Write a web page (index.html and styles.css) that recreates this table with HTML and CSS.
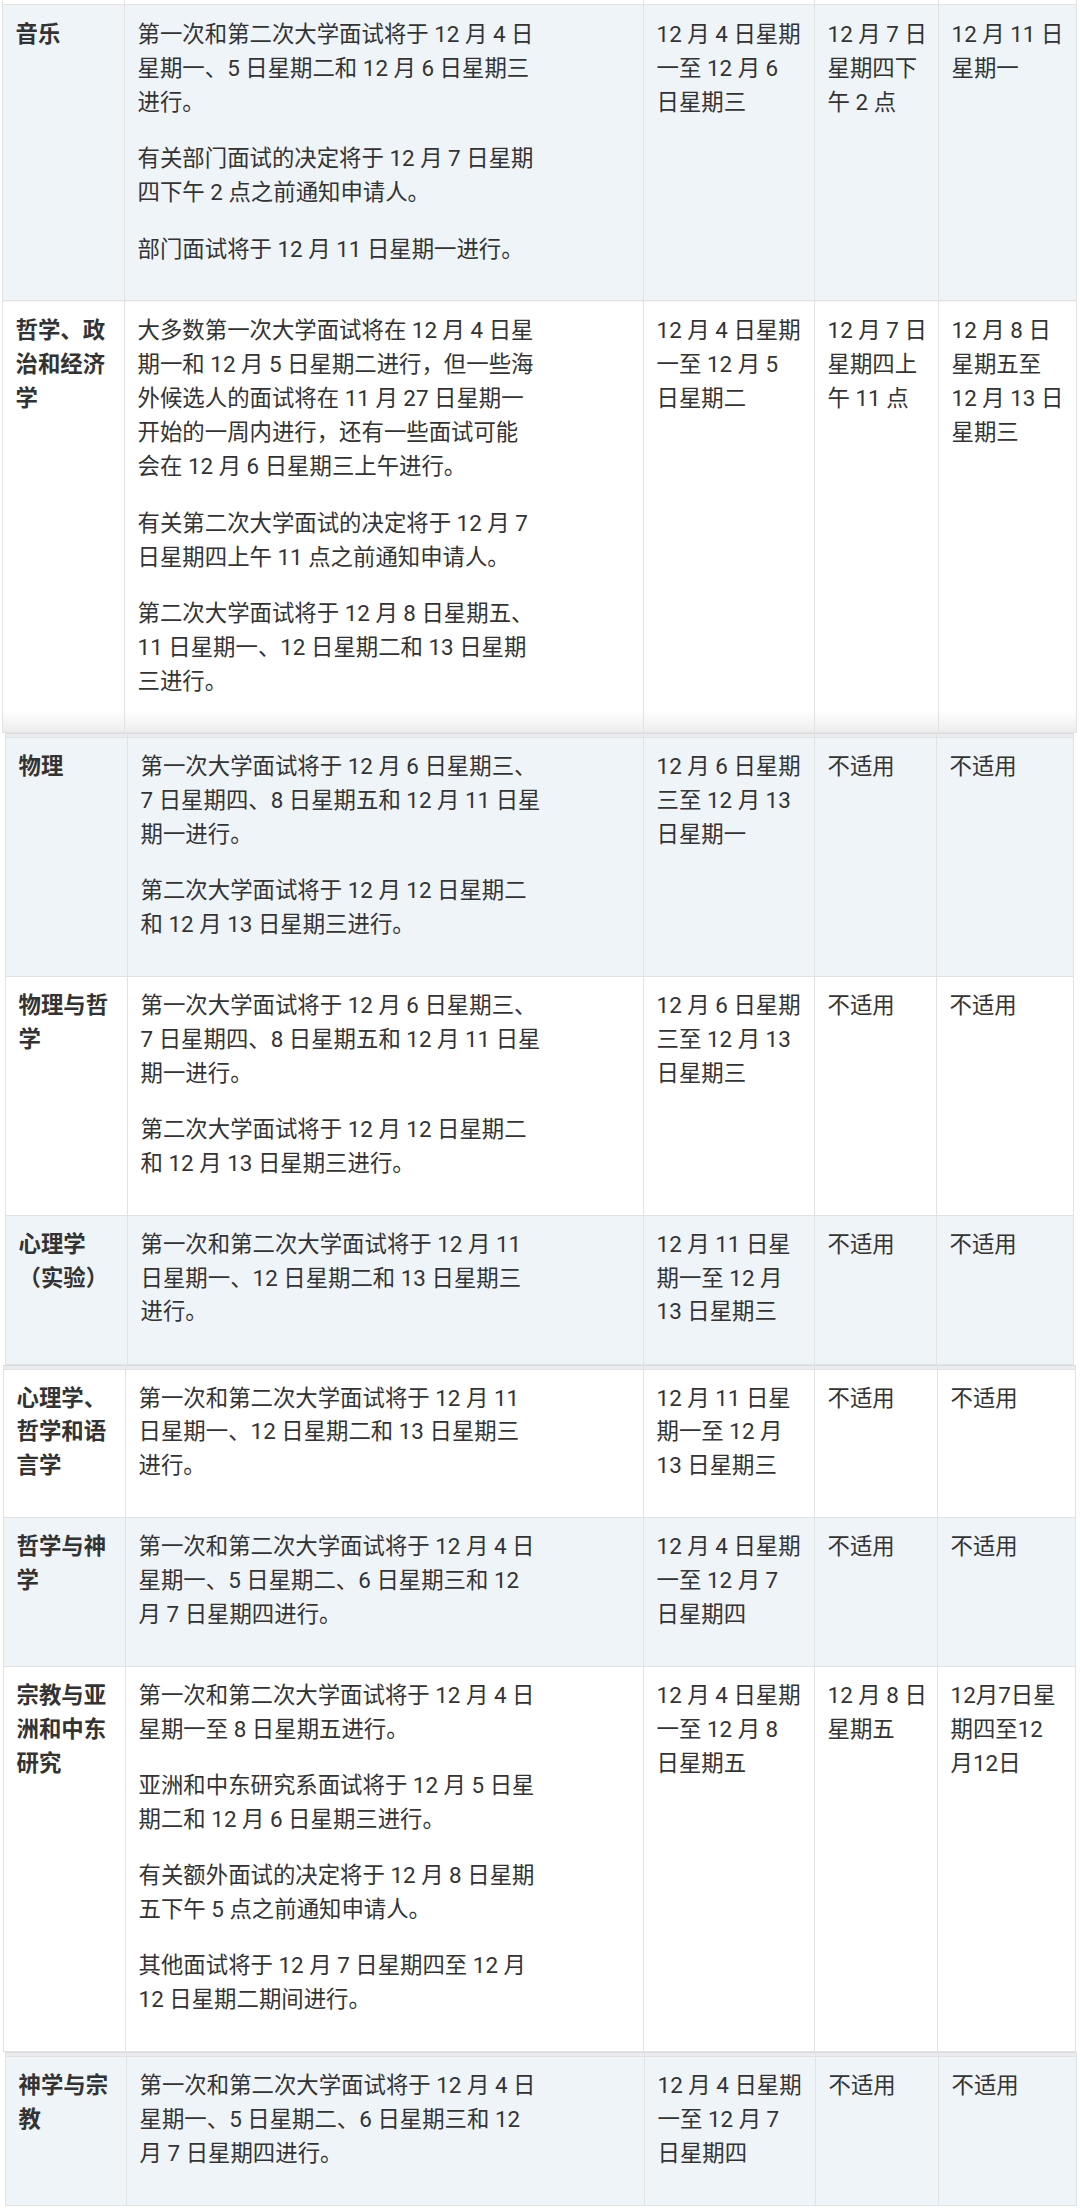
FILE: index.html
```html
<!DOCTYPE html>
<html lang="zh-CN">
<head>
<meta charset="utf-8">
<title>面试日期</title>
<link rel="stylesheet" href="styles.css">
</head>
<body>
<div class="page">

<table class="seg seg1">
  <colgroup><col class="c1"><col class="c2"><col class="c3"><col class="c4"><col class="c5"></colgroup>
  <tr class="cut"><td></td><td></td><td></td><td></td><td></td></tr>
  <tr class="alt">
    <th>音乐</th>
    <td class="desc">
      <p>第一次和第二次大学面试将于 12 月 4 日星期一、5 日星期二和 12 月 6 日星期三进行。</p>
      <p>有关部门面试的决定将于 12 月 7 日星期四下午 2 点之前通知申请人。</p>
      <p>部门面试将于 12 月 11 日星期一进行。</p>
    </td>
    <td>12 月 4 日星期一至 12 月 6 日星期三</td>
    <td class="n4">12 月 7 日星期四下午 2 点</td>
    <td>12 月 11 日星期一</td>
  </tr>
  <tr class="fade">
    <th>哲学、政治和经济学</th>
    <td class="desc">
      <p>大多数第一次大学面试将在 12 月 4 日星期一和 12 月 5 日星期二进行，但一些海外候选人的面试将在 11 月 27 日星期一开始的一周内进行，还有一些面试可能会在 12 月 6 日星期三上午进行。</p>
      <p>有关第二次大学面试的决定将于 12 月 7 日星期四上午 11 点之前通知申请人。</p>
      <p>第二次大学面试将于 12 月 8 日星期五、11 日星期一、12 日星期二和 13 日星期三进行。</p>
    </td>
    <td>12 月 4 日星期一至 12 月 5 日星期二</td>
    <td class="n4">12 月 7 日星期四上午 11 点</td>
    <td>12 月 8 日星期五至 12 月 13 日星期三</td>
  </tr>
</table>

<table class="seg seg2">
  <colgroup><col class="c1"><col class="c2"><col class="c3"><col class="c4"><col class="c5"></colgroup>
  <tr class="cut seam"><td></td><td></td><td></td><td></td><td></td></tr>
  <tr class="alt">
    <th>物理</th>
    <td class="desc">
      <p>第一次大学面试将于 12 月 6 日星期三、7 日星期四、8 日星期五和 12 月 11 日星期一进行。</p>
      <p>第二次大学面试将于 12 月 12 日星期二和 12 月 13 日星期三进行。</p>
    </td>
    <td>12 月 6 日星期三至 12 月 13 日星期一</td>
    <td class="n4">不适用</td>
    <td>不适用</td>
  </tr>
  <tr>
    <th>物理与哲学</th>
    <td class="desc">
      <p>第一次大学面试将于 12 月 6 日星期三、7 日星期四、8 日星期五和 12 月 11 日星期一进行。</p>
      <p>第二次大学面试将于 12 月 12 日星期二和 12 月 13 日星期三进行。</p>
    </td>
    <td>12 月 6 日星期三至 12 月 13 日星期三</td>
    <td class="n4">不适用</td>
    <td>不适用</td>
  </tr>
  <tr class="alt">
    <th>心理学（实验）</th>
    <td class="desc">
      <p>第一次和第二次大学面试将于 12 月 11 日星期一、12 日星期二和 13 日星期三进行。</p>
    </td>
    <td>12 月 11 日星期一至 12 月 13 日星期三</td>
    <td class="n4">不适用</td>
    <td>不适用</td>
  </tr>
</table>

<table class="seg seg3">
  <colgroup><col class="c1"><col class="c2"><col class="c3"><col class="c4"><col class="c5"></colgroup>
  <tr class="cut seam"><td></td><td></td><td></td><td></td><td></td></tr>
  <tr>
    <th>心理学、哲学和语言学</th>
    <td class="desc">
      <p>第一次和第二次大学面试将于 12 月 11 日星期一、12 日星期二和 13 日星期三进行。</p>
    </td>
    <td>12 月 11 日星期一至 12 月 13 日星期三</td>
    <td class="n4">不适用</td>
    <td>不适用</td>
  </tr>
  <tr class="alt">
    <th>哲学与神学</th>
    <td class="desc">
      <p>第一次和第二次大学面试将于 12 月 4 日星期一、5 日星期二、6 日星期三和 12 月 7 日星期四进行。</p>
    </td>
    <td>12 月 4 日星期一至 12 月 7 日星期四</td>
    <td class="n4">不适用</td>
    <td>不适用</td>
  </tr>
  <tr>
    <th>宗教与亚洲和中东研究</th>
    <td class="desc">
      <p>第一次和第二次大学面试将于 12 月 4 日星期一至 8 日星期五进行。</p>
      <p>亚洲和中东研究系面试将于 12 月 5 日星期二和 12 月 6 日星期三进行。</p>
      <p>有关额外面试的决定将于 12 月 8 日星期五下午 5 点之前通知申请人。</p>
      <p>其他面试将于 12 月 7 日星期四至 12 月 12 日星期二期间进行。</p>
    </td>
    <td>12 月 4 日星期一至 12 月 8 日星期五</td>
    <td class="n4">12 月 8 日星期五</td>
    <td>12月7日星期四至12月12日</td>
  </tr>
</table>

<table class="seg seg4">
  <colgroup><col class="c1"><col class="c2"><col class="c3"><col class="c4"><col class="c5"></colgroup>
  <tr class="cut seam"><td></td><td></td><td></td><td></td><td></td></tr>
  <tr class="alt">
    <th>神学与宗教</th>
    <td class="desc">
      <p>第一次和第二次大学面试将于 12 月 4 日星期一、5 日星期二、6 日星期三和 12 月 7 日星期四进行。</p>
    </td>
    <td>12 月 4 日星期一至 12 月 7 日星期四</td>
    <td class="n4">不适用</td>
    <td>不适用</td>
  </tr>
</table>

</div>
</body>
</html>
```

FILE: styles.css
```css
html, body {
  margin: 0;
  padding: 0;
  background: #ffffff;
}

.page {
  width: 1080px;
  font-family: "Roboto", "Noto Sans CJK SC", sans-serif;
  font-size: 22.4px;
  line-height: 33.8px;
  color: #333333;
}

.seg {
  border-collapse: collapse;
  table-layout: fixed;
}

.seg th,
.seg td {
  border: 1px solid #e2e2e2;
  padding: 12px 12.6px;
  vertical-align: top;
  text-align: left;
}

.seg th {
  font-weight: 700;
}

.seg td.n4 {
  padding-right: 10px;
}

.desc p {
  margin: 0 0 22.4px;
  max-width: 401.5px;
}

.alt th,
.alt td {
  background: #eff4f8;
}

.fade th,
.fade td {
  background: linear-gradient(to bottom, #ffffff calc(100% - 22px), #ececec);
}

.cut td {
  padding: 0;
  height: 4px;
  line-height: 0;
  font-size: 0;
  border-top: none;
}

.seam td {
  height: 3px;
  background: #e9edf0;
  border-top: 1px solid #dcdcdc;
}

/* segment 1 */
.seg1 { margin-left: 2px; width: 1074px; line-height: 34px; }
.seg1 .c1 { width: 122px; }
.seg1 .c2 { width: 519px; }
.seg1 .c3 { width: 171px; }
.seg1 .c4 { width: 124px; }
.seg1 .c5 { width: 138px; }

/* segment 2 */
.seg2 { margin-left: 5px; width: 1068px; }
.seg2 .c1 { width: 122px; }
.seg2 .c2 { width: 516px; }
.seg2 .c3 { width: 171px; }
.seg2 .c4 { width: 122px; }
.seg2 .c5 { width: 137px; }

/* segment 3 */
.seg3 { margin-left: 3px; width: 1072px; }
.seg3 .c1 { width: 122px; }
.seg3 .c2 { width: 518px; }
.seg3 .c3 { width: 171px; }
.seg3 .c4 { width: 123px; }
.seg3 .c5 { width: 138px; }

/* segment 4 */
.seg4 { margin-left: 5px; width: 1071px; }
.seg4 .c1 { width: 121px; }
.seg4 .c2 { width: 518px; }
.seg4 .c3 { width: 171px; }
.seg4 .c4 { width: 123px; }
.seg4 .c5 { width: 138px; }
```
